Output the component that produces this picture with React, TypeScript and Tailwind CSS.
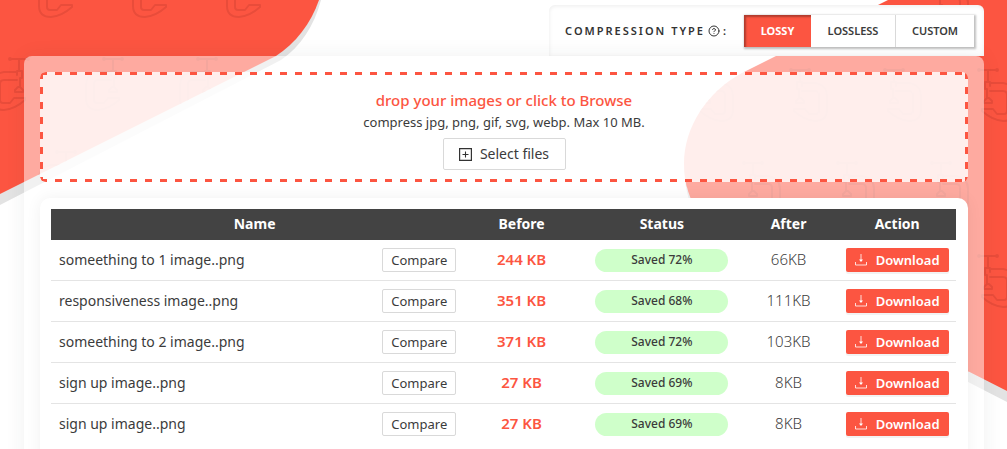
import React from "react";
import { CircleHelp } from "lucide-react";

type Row = { name: string; before: string; saved: string; after: string };

const rows: Row[] = [
  { name: "someething to 1 image..png", before: "244 KB", saved: "Saved 72%", after: "66KB" },
  { name: "responsiveness image..png", before: "351 KB", saved: "Saved 68%", after: "111KB" },
  { name: "someething to 2 image..png", before: "371 KB", saved: "Saved 72%", after: "103KB" },
  { name: "sign up image..png", before: "27 KB", saved: "Saved 69%", after: "8KB" },
  { name: "sign up image..png", before: "27 KB", saved: "Saved 69%", after: "8KB" },
];

function ClampDefs({ id, mirrored }: { id: string; mirrored?: boolean }) {
  const clamp = (
    <g fill="none" stroke="#e94c3a" strokeWidth="2" strokeLinejoin="round" strokeLinecap="round">
      <path d="M10 2H28M19 2V14" />
      <circle cx="10" cy="2" r="1" />
      <circle cx="28" cy="2" r="1" />
      <path d="M17 18V14H22V21H20V30M20 30L23 33V35H15V33L18 30H20" />
      <path d="M17 15H4Q-8 17 -8 28V42Q-8 53 4 53Q15 52 25 43V41H14L10 46H3Q0 46 0 43V27Q0 23 4 23H17" />
    </g>
  );
  return (
    <pattern
      id={id}
      width="94"
      height="186"
      patternUnits="userSpaceOnUse"
      patternTransform={mirrored ? "translate(1007 68) scale(-1 1)" : "translate(0 57)"}
    >
      {clamp}
      <g transform="translate(94 0)">{clamp}</g>
      <g transform="translate(47 93)">{clamp}</g>
      <g transform="translate(47 -93)">{clamp}</g>
    </pattern>
  );
}

function Backdrop() {
  return (
    <div className="pointer-events-none absolute inset-0 -z-10 flex justify-between overflow-hidden" aria-hidden="true">
      <svg width="330" height="449" viewBox="0 0 330 449" className="shrink-0">
        <defs><ClampDefs id="clampLeft" /></defs>
        <path d="M0 0H321C314 26 301 46 281 60L0 205Z" fill="#e3e3e3" />
        <path d="M0 0H319C311 23 296 43 276 56L0 194Z" fill="#fc5541" />
        <path d="M0 0H319C311 23 296 43 276 56L0 194Z" fill="url(#clampLeft)" />
      </svg>
      <svg width="330" height="449" viewBox="677 0 330 449" className="shrink-0">
        <defs><ClampDefs id="clampRight" mirrored /></defs>
        <path d="M1007 402L760 275C710 248 684 215 684 164V160L1007 391Z" fill="#e3e3e3" />
        <path d="M1007 0H888L742 73C707 92 684 127 684 164C684 208 715 243 757 264L1007 391Z" fill="#fc5541" />
        <path d="M1007 0H888L742 73C707 92 684 127 684 164C684 208 715 243 757 264L1007 391Z" fill="url(#clampRight)" />
      </svg>
    </div>
  );
}

function DropFrame() {
  return (
    <svg className="pointer-events-none absolute inset-0 h-full w-full" aria-hidden="true">
      <defs>
        <pattern id="dashX" width="15" height="3" patternUnits="userSpaceOnUse"><path d="M0 0H7V3H0Z" fill="#fc5541" /></pattern>
        <pattern id="dashY" width="3" height="15" patternUnits="userSpaceOnUse"><path d="M0 0H3V7H0Z" fill="#fc5541" /></pattern>
      </defs>
      <rect width="100%" height="3" fill="url(#dashX)" />
      <rect y="100%" width="100%" height="3" transform="translate(0 -3)" fill="url(#dashX)" />
      <rect width="3" height="100%" fill="url(#dashY)" />
      <rect x="100%" width="3" height="100%" transform="translate(-3 0)" fill="url(#dashY)" />
    </svg>
  );
}

function PlusSquare() {
  return (
    <svg width="13" height="13" viewBox="0 0 13 13" fill="none" stroke="#333" aria-hidden="true">
      <path d="M.6.6H12.4V12.4H.6Z" strokeWidth="1.2" />
      <path d="M3.5 6.5H9.5M6.5 3.5V9.5" strokeWidth="1.1" />
    </svg>
  );
}

function DownloadIcon() {
  return (
    <svg width="12" height="12" viewBox="0 0 12 12" fill="none" stroke="#fff" strokeOpacity=".8" aria-hidden="true">
      <path d="M.5 8V11H11.5V8" />
      <path d="M6 0V7" />
      <path d="M4 5.5H8L6 8Z" fill="#fff" stroke="none" />
    </svg>
  );
}

export default function App() {
  return (
    <div className="relative isolate h-screen overflow-hidden bg-white pt-[5px] pr-[23px] pl-6 font-['Noto_Sans',sans-serif] text-[#3b3b3b]">
      <Backdrop />

      <div className="ml-auto flex h-[51px] w-fit items-center rounded-t-md bg-white pt-px pr-[10px] pl-4 shadow-[inset_0_1px_4px_rgba(0,0,0,0.08)]">
        <span className="flex items-center text-[11px] font-semibold tracking-[2px] text-[#333]">
          COMPRESSION TYPE
          <CircleHelp className="mx-[3px]" size={12} strokeWidth={2} />:
        </span>
        <div className="ml-4 flex h-8 bg-white text-[11px] font-semibold shadow-[1px_1px_2px_1px_rgba(0,0,0,0.25)]" role="group" aria-label="Compression type">
          <button className="w-[67px] bg-[#fc5541] font-bold text-white shadow-[inset_2px_2px_2px_rgba(0,0,0,0.3)]">LOSSY</button>
          <button className="w-[85px] border-r border-[#d9d9d9]">LOSSLESS</button>
          <button className="w-[78px]">CUSTOM</button>
        </div>
      </div>

      <main className="h-full rounded-t-lg bg-white/50 p-4 shadow-[0_0_20px_rgba(40,50,60,0.07)]">
        <section className="relative flex h-[110px] flex-col items-center overflow-hidden rounded-md bg-white/80 pt-4">
          <DropFrame />
          <p className="text-[15px] leading-6 font-medium text-[#fc5541]">drop your images or click to Browse</p>
          <p className="text-[13px] leading-5">compress jpg, png, gif, svg, webp. Max 10 MB.</p>
          <button className="mt-[6px] flex h-8 w-[123px] items-center justify-center gap-2 rounded-xs border border-[#d9d9d9] bg-white text-sm">
            <PlusSquare />
            Select files
          </button>
        </section>

        <section className="mt-4 h-full rounded-t-[10px] bg-white pt-[11px] pr-3 pl-[11px] shadow-[0_0_16px_rgba(0,0,0,0.06)]">
          <table className="w-full table-fixed border-separate border-spacing-0 text-sm">
            <colgroup>
              <col className="w-[45%]" />
              <col className="w-[14%]" />
              <col className="w-[17%]" />
              <col className="w-[11%]" />
              <col className="w-[13%]" />
            </colgroup>
            <thead className="bg-[#434343] text-white">
              <tr className="h-[31px] [&>th]:p-0 [&>th]:pb-[2px]">
                <th>Name</th>
                <th>Before</th>
                <th>Status</th>
                <th>After</th>
                <th>Action</th>
              </tr>
            </thead>
            <tbody>
              {rows.map((row, i) => (
                <tr key={i} className="h-[41px] [&>td]:border-b [&>td]:border-[#e4e4e4] last:[&>td]:border-transparent">
                  <td className="px-2">
                    <div className="-mr-[6px] flex items-center justify-between">
                      <span>{row.name}</span>
                      <button className="h-6 w-[74px] rounded-xs border border-[#d9d9d9] bg-white text-[13px] leading-5">Compare</button>
                    </div>
                  </td>
                  <td className="text-center text-[15px] font-semibold text-[#fc5541]">{row.before}</td>
                  <td>
                    <div className="mx-auto h-[23px] w-[133px] rounded-full bg-[#cfffca] text-center text-xs leading-[22px] font-medium">{row.saved}</div>
                  </td>
                  <td className="text-center text-[15px] font-light">{row.after}</td>
                  <td>
                    <button className="mx-auto flex h-6 w-[103px] items-center justify-center gap-[9px] rounded-xs bg-[#fc5541] text-[13px] font-semibold text-white shadow-[0_2px_0_rgba(0,0,0,0.05)]">
                      <DownloadIcon />
                      Download
                    </button>
                  </td>
                </tr>
              ))}
            </tbody>
          </table>
        </section>
      </main>
    </div>
  );
}
